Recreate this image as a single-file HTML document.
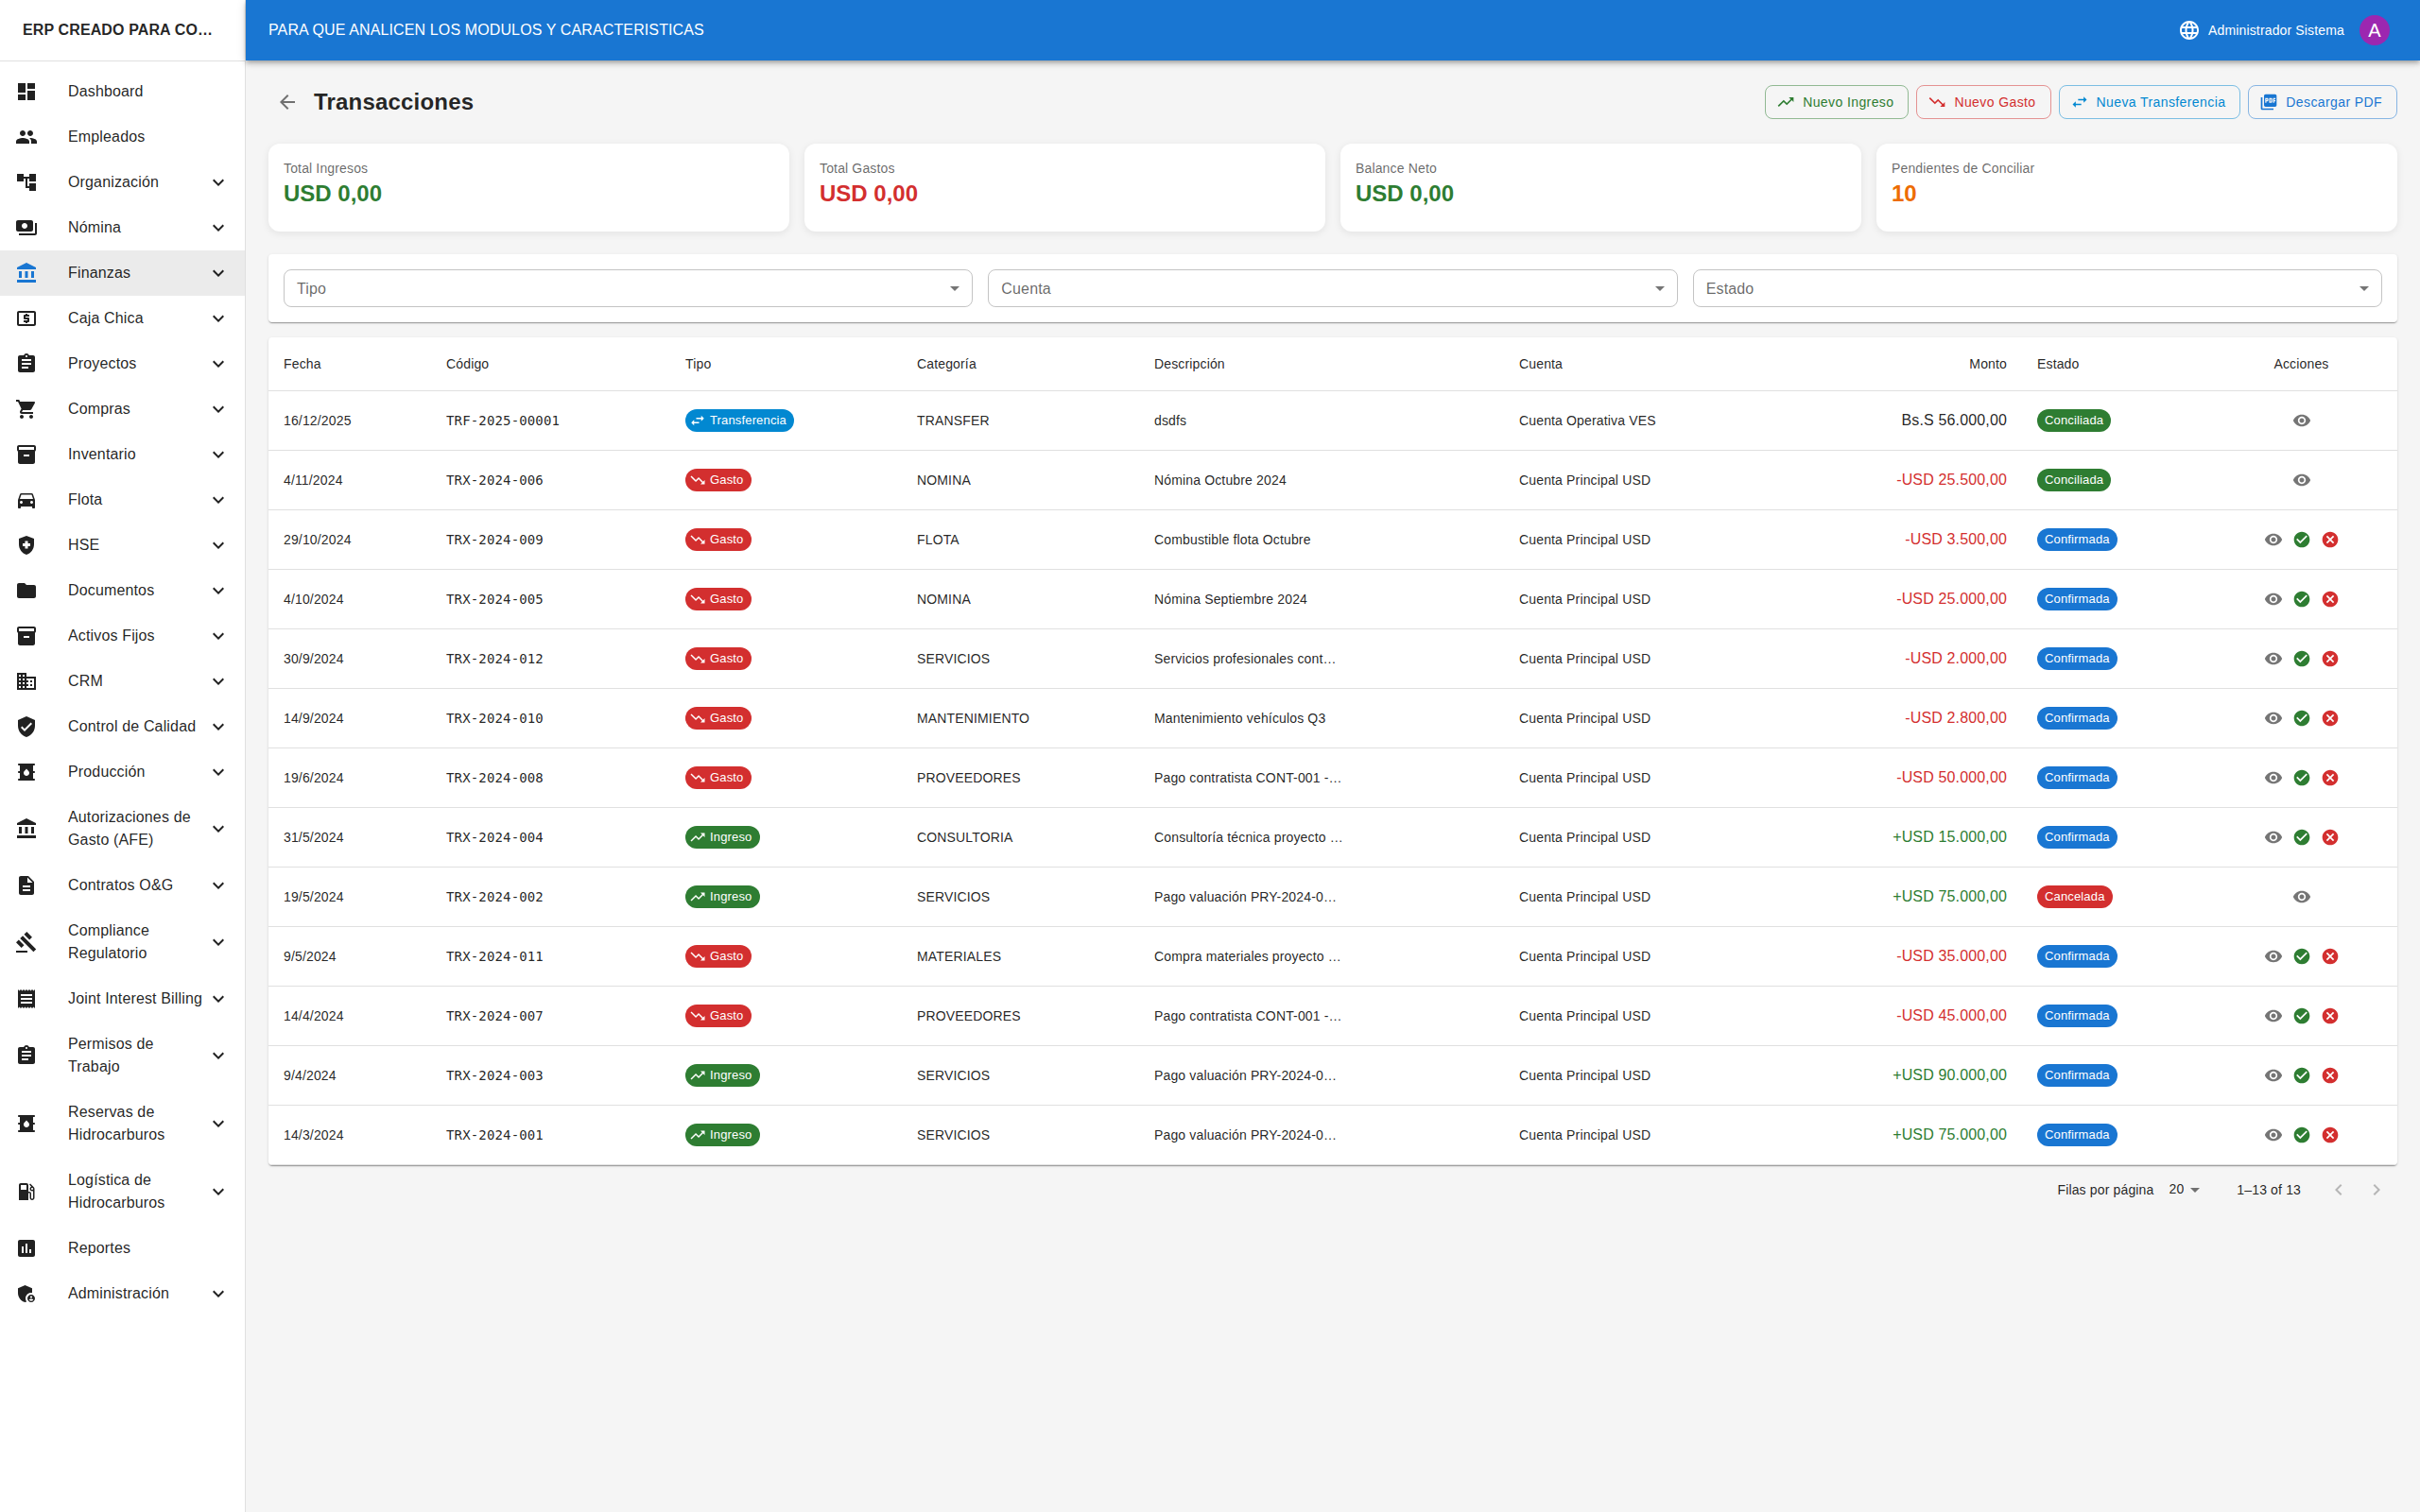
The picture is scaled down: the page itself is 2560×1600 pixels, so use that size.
<!DOCTYPE html>
<html lang="es"><head><meta charset="utf-8"><title>Transacciones</title>
<style>
*{box-sizing:border-box}
html,body{margin:0;padding:0}
body{width:2560px;height:1600px;overflow:hidden;background:#f5f5f5;font-family:"Liberation Sans",sans-serif;color:rgba(0,0,0,0.87);font-size:16px;position:relative}
svg{display:inline-block;flex-shrink:0;fill:currentColor}
.drawer{position:absolute;left:0;top:0;width:260px;height:1600px;background:#fff;border-right:1px solid rgba(0,0,0,0.12)}
.brand{height:65px;padding:0 24px;display:flex;align-items:center;border-bottom:1px solid rgba(0,0,0,0.12);font-weight:bold;font-size:16px;white-space:nowrap;letter-spacing:0.12px}
.menu{list-style:none;margin:0;padding:8px 0 0 0}
.item{height:48px;display:flex;align-items:center;padding:0 16px;position:relative}
.item.two{height:72px}
.item.sel{background:rgba(0,0,0,0.08)}
.item .ico{width:56px;height:24px;display:inline-flex;color:rgba(0,0,0,0.87)}
.item .ico svg{fill:rgba(0,0,0,0.87)}
.item .lbl{flex:1;font-size:16px;line-height:24px;letter-spacing:0.15px}
.item .exp{fill:rgba(0,0,0,0.87)}
.appbar{position:absolute;left:260px;top:0;width:2300px;height:64px;background:#1976d2;color:#fff;display:flex;align-items:center;padding:0 24px;box-shadow:0 2px 4px -1px rgba(0,0,0,.2),0 4px 5px 0 rgba(0,0,0,.14),0 1px 10px 0 rgba(0,0,0,.12)}
.apptitle{flex:1;font-size:16px;white-space:nowrap;letter-spacing:0.12px}
.appright{display:flex;align-items:center;margin-right:8px}
.globe{display:inline-flex;padding:8px;margin-right:0}
.uname{font-size:14px;letter-spacing:0.15px;margin:0 0 0 0}
.avatar{width:32px;height:32px;border-radius:50%;background:#9c27b0;color:#fff;display:inline-flex;align-items:center;justify-content:center;font-size:20px;margin-left:16px}
.main{position:absolute;left:260px;top:64px;width:2300px;padding:24px}
.pagehead{display:flex;align-items:center;height:40px;margin-bottom:24px}
.backbtn{width:40px;height:40px;display:inline-flex;align-items:center;justify-content:center;margin-right:8px}
h1{letter-spacing:0.19px;margin:0;font-size:24px;line-height:32px;font-weight:bold;flex:1}
.btns{display:flex;gap:8px}
.btn{display:inline-flex;align-items:center;height:36.5px;border:1px solid;border-radius:8px;padding:0 15px;font-size:14px;white-space:nowrap;letter-spacing:0.4px}
.btn .bi{margin-left:-4px;margin-right:8px}
.btn.g{color:#2e7d32;border-color:rgba(46,125,50,0.5)}
.btn.r{color:#d32f2f;border-color:rgba(211,47,47,0.5)}
.btn.i{color:#0288d1;border-color:rgba(2,136,209,0.5)}
.btn.p{color:#1976d2;border-color:rgba(25,118,210,0.5)}
.cards{display:flex;gap:16px;height:93px;margin-bottom:24px}
.card{flex:1;background:#fff;border-radius:12px;padding:16px 16px 24px;box-shadow:0 2px 8px rgba(0,0,0,0.08)}
.ct{font-size:14px;line-height:20px;letter-spacing:0.15px;color:rgba(0,0,0,0.6)}
.cv{font-size:24px;line-height:32px;font-weight:bold;margin-top:1px}
.filters{background:#fff;border-radius:4px;padding:16px;display:flex;gap:16px;height:72px;margin-bottom:16px;box-shadow:0 2px 1px -1px rgba(0,0,0,.2),0 1px 1px 0 rgba(0,0,0,.14),0 1px 3px 0 rgba(0,0,0,.12)}
.fsel{flex:1;height:40px;border:1px solid rgba(0,0,0,0.23);border-radius:8px;position:relative;display:flex;align-items:center;padding:0 13px}
.sl{position:relative;top:1px;font-size:16px;letter-spacing:0.15px;color:rgba(0,0,0,0.6)}
.dd{position:absolute;right:6px;top:7px}
.tpaper{background:#fff;border-radius:4px;box-shadow:0 2px 1px -1px rgba(0,0,0,.2),0 1px 1px 0 rgba(0,0,0,.14),0 1px 3px 0 rgba(0,0,0,.12);overflow:hidden}
table{border-collapse:collapse;table-layout:fixed;width:2252px}
th,td{letter-spacing:0.15px;text-align:left;padding:0 16px;font-size:14px;font-weight:normal;border-bottom:1px solid rgba(224,224,224,1);white-space:nowrap;overflow:hidden}
th{height:56.5px;line-height:24px}
td{height:63px}
.ar{text-align:right}
.ac{text-align:center}
.mono{font-family:"DejaVu Sans Mono","Liberation Mono",monospace;font-size:14px}
.amt{font-size:16px}
.amt.r{color:#d32f2f}
.amt.g{color:#2e7d32}
.chip{display:inline-flex;align-items:center;height:24px;border-radius:16px;color:#fff;font-size:13px;vertical-align:middle}
.chip>span{padding:0 8px;line-height:18.59px}
.chip.ic svg{margin-left:4px;margin-right:-4px}
.chip.err.ic>span,.chip.suc.ic>span{padding-right:8.95px}
.chip.suc{background:#2e7d32}
.chip.err{background:#d32f2f}
.chip.pri{background:#1976d2}
.chip.info{background:#0288d1}
.ib{display:inline-flex;padding:5px;vertical-align:middle}
.pager{letter-spacing:0.15px;display:flex;align-items:center;justify-content:flex-end;height:52px;font-size:14px;padding-right:2px}
.pl{margin-right:8px}
.pn{margin-left:8px;position:relative;top:-1px}
.pdd{margin-right:32px}
.pr{margin-right:20px}
.pb{display:inline-flex;padding:8px}

</style></head><body>
<nav class="drawer">
<div class="brand"><span>ERP CREADO PARA CO…</span></div>
<ul class="menu">
<li class="item"><span class="ico"><svg viewBox="0 0 24 24" style="width:24px;height:24px;"><path d="M3 13h8V3H3v10zm0 8h8v-6H3v6zm10 0h8V11h-8v10zm0-18v6h8V3h-8z"/></svg></span><span class="lbl">Dashboard</span></li>
<li class="item"><span class="ico"><svg viewBox="0 0 24 24" style="width:24px;height:24px;"><path d="M16 11c1.66 0 2.99-1.34 2.99-3S17.66 5 16 5c-1.66 0-3 1.34-3 3s1.34 3 3 3zm-8 0c1.66 0 2.99-1.34 2.99-3S9.66 5 8 5C6.34 5 5 6.34 5 8s1.34 3 3 3zm0 2c-2.33 0-7 1.17-7 3.5V19h14v-2.5c0-2.33-4.67-3.5-7-3.5zm8 0c-.29 0-.62.02-.97.05 1.16.84 1.97 1.97 1.97 3.45V19h6v-2.5c0-2.33-4.67-3.5-7-3.5z"/></svg></span><span class="lbl">Empleados</span></li>
<li class="item"><span class="ico"><svg viewBox="0 0 24 24" style="width:24px;height:24px;"><path d="M22 11V3h-7v3H9V3H2v8h7V8h2v10h4v3h7v-8h-7v3h-2V8h2v3z"/></svg></span><span class="lbl">Organización</span><svg class="exp" viewBox="0 0 24 24" style="width:24px;height:24px;"><path d="M16.590 8.590 12 13.170 7.410 8.590 6 10l6 6 6-6z"/></svg></li>
<li class="item"><span class="ico"><svg viewBox="0 0 24 24" style="width:24px;height:24px;"><path d="M19 14V6c0-1.1-.9-2-2-2H3c-1.1 0-2 .9-2 2v8c0 1.1.9 2 2 2h14c1.1 0 2-.9 2-2zm-9-1c-1.66 0-3-1.34-3-3s1.34-3 3-3 3 1.34 3 3-1.34 3-3 3zm13-6v11c0 1.1-.9 2-2 2H4v-2h17V7h2z"/></svg></span><span class="lbl">Nómina</span><svg class="exp" viewBox="0 0 24 24" style="width:24px;height:24px;"><path d="M16.590 8.590 12 13.170 7.410 8.590 6 10l6 6 6-6z"/></svg></li>
<li class="item sel"><span class="ico"><svg viewBox="0 0 24 24" style="width:24px;height:24px;fill:#1976d2;"><path d="M4 10h3v7H4zM10.500 10h3v7h-3zM2 19h20v3H2zM17 10h3v7h-3zM12 1 2 6v2h20V6z"/></svg></span><span class="lbl">Finanzas</span><svg class="exp" viewBox="0 0 24 24" style="width:24px;height:24px;"><path d="M16.590 8.590 12 13.170 7.410 8.590 6 10l6 6 6-6z"/></svg></li>
<li class="item"><span class="ico"><svg viewBox="0 0 24 24" style="width:24px;height:24px;"><path d="M11 17h2v-1h1c.55 0 1-.45 1-1v-3c0-.55-.45-1-1-1h-3v-1h4V8h-2V7h-2v1h-1c-.55 0-1 .45-1 1v3c0 .55.45 1 1 1h3v1H9v2h2v1zm9-13H4c-1.11 0-1.99.89-1.99 2L2 18c0 1.11.89 2 2 2h16c1.11 0 2-.89 2-2V6c0-1.11-.89-2-2-2zm0 14H4V6h16v12z"/></svg></span><span class="lbl">Caja Chica</span><svg class="exp" viewBox="0 0 24 24" style="width:24px;height:24px;"><path d="M16.590 8.590 12 13.170 7.410 8.590 6 10l6 6 6-6z"/></svg></li>
<li class="item"><span class="ico"><svg viewBox="0 0 24 24" style="width:24px;height:24px;"><path d="M19 3h-4.180C14.400 1.840 13.300 1 12 1c-1.300 0-2.400.840-2.820 2H5c-1.100 0-2 .900-2 2v14c0 1.100.900 2 2 2h14c1.100 0 2-.900 2-2V5c0-1.100-.900-2-2-2zm-7 0c.550 0 1 .450 1 1s-.450 1-1 1-1-.450-1-1 .450-1 1-1zm2 14H7v-2h7v2zm3-4H7v-2h10v2zm0-4H7V7h10v2z"/></svg></span><span class="lbl">Proyectos</span><svg class="exp" viewBox="0 0 24 24" style="width:24px;height:24px;"><path d="M16.590 8.590 12 13.170 7.410 8.590 6 10l6 6 6-6z"/></svg></li>
<li class="item"><span class="ico"><svg viewBox="0 0 24 24" style="width:24px;height:24px;"><path d="M7 18c-1.100 0-1.990.900-1.990 2S5.900 22 7 22s2-.900 2-2-.900-2-2-2zM1 2v2h2l3.600 7.590-1.350 2.450c-.160.280-.250.610-.250.960 0 1.100.900 2 2 2h12v-2H7.420c-.140 0-.250-.110-.250-.250l.030-.120.900-1.630h7.450c.750 0 1.410-.410 1.750-1.030l3.580-6.490c.080-.140.120-.310.120-.480 0-.550-.450-1-1-1H5.210l-.940-2H1zm16 16c-1.100 0-1.990.900-1.990 2s.890 2 1.990 2 2-.900 2-2-.900-2-2-2z"/></svg></span><span class="lbl">Compras</span><svg class="exp" viewBox="0 0 24 24" style="width:24px;height:24px;"><path d="M16.590 8.590 12 13.170 7.410 8.590 6 10l6 6 6-6z"/></svg></li>
<li class="item"><span class="ico"><svg viewBox="0 0 24 24" style="width:24px;height:24px;"><path d="M20 2H4c-1 0-2 .9-2 2v3.010c0 .720.430 1.340 1 1.690V20c0 1.100 1.100 2 2 2h14c.900 0 2-.900 2-2V8.700c.570-.350 1-.970 1-1.690V4c0-1.100-1-2-2-2zm-5 12H9v-2h6v2zm5-7H4V4h16v3z"/></svg></span><span class="lbl">Inventario</span><svg class="exp" viewBox="0 0 24 24" style="width:24px;height:24px;"><path d="M16.590 8.590 12 13.170 7.410 8.590 6 10l6 6 6-6z"/></svg></li>
<li class="item"><span class="ico"><svg viewBox="0 0 24 24" style="width:24px;height:24px;"><path d="M18.920 6.010C18.720 5.420 18.160 5 17.500 5h-11c-.660 0-1.210.420-1.420 1.010L3 12v8c0 .550.450 1 1 1h1c.550 0 1-.450 1-1v-1h12v1c0 .550.450 1 1 1h1c.550 0 1-.450 1-1v-8l-2.080-5.990zM6.500 16c-.830 0-1.500-.670-1.500-1.500S5.670 13 6.500 13s1.500.670 1.500 1.500S7.330 16 6.500 16zm11 0c-.830 0-1.500-.670-1.500-1.500s.670-1.500 1.500-1.500 1.500.670 1.500 1.500-.670 1.500-1.500 1.500zM5 11l1.500-4.500h11L19 11H5z"/></svg></span><span class="lbl">Flota</span><svg class="exp" viewBox="0 0 24 24" style="width:24px;height:24px;"><path d="M16.590 8.590 12 13.170 7.410 8.590 6 10l6 6 6-6z"/></svg></li>
<li class="item"><span class="ico"><svg viewBox="0 0 24 24" style="width:24px;height:24px;"><path d="M10.500 13H8v-3h2.500V7.500h3V10H16v3h-2.500v2.500h-3V13zM12 2 4 5v6.090c0 5.050 3.410 9.760 8 10.910 4.590-1.150 8-5.860 8-10.910V5l-8-3z"/></svg></span><span class="lbl">HSE</span><svg class="exp" viewBox="0 0 24 24" style="width:24px;height:24px;"><path d="M16.590 8.590 12 13.170 7.410 8.590 6 10l6 6 6-6z"/></svg></li>
<li class="item"><span class="ico"><svg viewBox="0 0 24 24" style="width:24px;height:24px;"><path d="M10 4H4c-1.100 0-1.990.900-1.990 2L2 18c0 1.100.900 2 2 2h16c1.100 0 2-.900 2-2V8c0-1.100-.900-2-2-2h-8l-2-2z"/></svg></span><span class="lbl">Documentos</span><svg class="exp" viewBox="0 0 24 24" style="width:24px;height:24px;"><path d="M16.590 8.590 12 13.170 7.410 8.590 6 10l6 6 6-6z"/></svg></li>
<li class="item"><span class="ico"><svg viewBox="0 0 24 24" style="width:24px;height:24px;"><path d="M20 2H4c-1 0-2 .9-2 2v3.010c0 .720.430 1.340 1 1.690V20c0 1.100 1.100 2 2 2h14c.900 0 2-.900 2-2V8.700c.570-.350 1-.970 1-1.690V4c0-1.100-1-2-2-2zm-5 12H9v-2h6v2zm5-7H4V4h16v3z"/></svg></span><span class="lbl">Activos Fijos</span><svg class="exp" viewBox="0 0 24 24" style="width:24px;height:24px;"><path d="M16.590 8.590 12 13.170 7.410 8.590 6 10l6 6 6-6z"/></svg></li>
<li class="item"><span class="ico"><svg viewBox="0 0 24 24" style="width:24px;height:24px;"><path d="M12 7V3H2v18h20V7H12zM6 19H4v-2h2v2zm0-4H4v-2h2v2zm0-4H4V9h2v2zm0-4H4V5h2v2zm4 12H8v-2h2v2zm0-4H8v-2h2v2zm0-4H8V9h2v2zm0-4H8V5h2v2zm10 12h-8v-2h2v-2h-2v-2h2v-2h-2V9h8v10zm-2-8h-2v2h2v-2zm0 4h-2v2h2v-2z"/></svg></span><span class="lbl">CRM</span><svg class="exp" viewBox="0 0 24 24" style="width:24px;height:24px;"><path d="M16.590 8.590 12 13.170 7.410 8.590 6 10l6 6 6-6z"/></svg></li>
<li class="item"><span class="ico"><svg viewBox="0 0 24 24" style="width:24px;height:24px;"><path d="M12 1 3 5v6c0 5.550 3.840 10.740 9 12 5.160-1.260 9-6.450 9-12V5l-9-4zm-2 16-4-4 1.410-1.410L10 14.170l6.590-6.590L18 9l-8 8z"/></svg></span><span class="lbl">Control de Calidad</span><svg class="exp" viewBox="0 0 24 24" style="width:24px;height:24px;"><path d="M16.590 8.590 12 13.170 7.410 8.590 6 10l6 6 6-6z"/></svg></li>
<li class="item"><span class="ico"><svg viewBox="0 0 24 24" style="width:24px;height:24px;"><path d="M20 13c.55 0 1-.45 1-1s-.45-1-1-1h-1V5h1c.55 0 1-.45 1-1s-.45-1-1-1H4c-.55 0-1 .45-1 1s.45 1 1 1h1v6H4c-.55 0-1 .45-1 1s.45 1 1 1h1v6H4c-.55 0-1 .45-1 1s.45 1 1 1h16c.55 0 1-.45 1-1s-.45-1-1-1h-1v-6h1zm-8 3c-1.660 0-3-1.320-3-2.950 0-1.300.520-1.670 3-4.550 2.470 2.860 3 3.240 3 4.550 0 1.630-1.340 2.950-3 2.950z"/></svg></span><span class="lbl">Producción</span><svg class="exp" viewBox="0 0 24 24" style="width:24px;height:24px;"><path d="M16.590 8.590 12 13.170 7.410 8.590 6 10l6 6 6-6z"/></svg></li>
<li class="item two"><span class="ico"><svg viewBox="0 0 24 24" style="width:24px;height:24px;"><path d="M4 10h3v7H4zM10.500 10h3v7h-3zM2 19h20v3H2zM17 10h3v7h-3zM12 1 2 6v2h20V6z"/></svg></span><span class="lbl">Autorizaciones de<br>Gasto (AFE)</span><svg class="exp" viewBox="0 0 24 24" style="width:24px;height:24px;"><path d="M16.590 8.590 12 13.170 7.410 8.590 6 10l6 6 6-6z"/></svg></li>
<li class="item"><span class="ico"><svg viewBox="0 0 24 24" style="width:24px;height:24px;"><path d="M14 2H6c-1.100 0-1.990.900-1.990 2L4 20c0 1.100.890 2 1.990 2H18c1.100 0 2-.900 2-2V8l-6-6zm2 16H8v-2h8v2zm0-4H8v-2h8v2zm-3-5V3.500L18.500 9H13z"/></svg></span><span class="lbl">Contratos O&amp;G</span><svg class="exp" viewBox="0 0 24 24" style="width:24px;height:24px;"><path d="M16.590 8.590 12 13.170 7.410 8.590 6 10l6 6 6-6z"/></svg></li>
<li class="item two"><span class="ico"><svg viewBox="0 0 24 24" style="width:24px;height:24px;"><path d="M1 21h12v2H1zM5.245 8.070l2.830-2.827 14.140 14.142-2.828 2.828zM12.317 1l5.657 5.656-2.830 2.830-5.654-5.660zM3.825 9.485l5.657 5.657-2.828 2.828-5.657-5.657z"/></svg></span><span class="lbl">Compliance<br>Regulatorio</span><svg class="exp" viewBox="0 0 24 24" style="width:24px;height:24px;"><path d="M16.590 8.590 12 13.170 7.410 8.590 6 10l6 6 6-6z"/></svg></li>
<li class="item"><span class="ico"><svg viewBox="0 0 24 24" style="width:24px;height:24px;"><path d="M18 17H6v-2h12v2zm0-4H6v-2h12v2zm0-4H6V7h12v2zM3 22l1.500-1.500L6 22l1.500-1.500L9 22l1.500-1.500L12 22l1.500-1.500L15 22l1.500-1.500L18 22l1.500-1.500L21 22V2l-1.500 1.500L18 2l-1.500 1.500L15 2l-1.500 1.500L12 2l-1.500 1.500L9 2 7.500 3.500 6 2 4.500 3.500 3 2v20z"/></svg></span><span class="lbl">Joint Interest Billing</span><svg class="exp" viewBox="0 0 24 24" style="width:24px;height:24px;"><path d="M16.590 8.590 12 13.170 7.410 8.590 6 10l6 6 6-6z"/></svg></li>
<li class="item two"><span class="ico"><svg viewBox="0 0 24 24" style="width:24px;height:24px;"><path d="M19 3h-4.180C14.400 1.840 13.300 1 12 1c-1.300 0-2.400.840-2.820 2H5c-1.100 0-2 .900-2 2v14c0 1.100.900 2 2 2h14c1.100 0 2-.900 2-2V5c0-1.100-.900-2-2-2zm-7 0c.550 0 1 .450 1 1s-.450 1-1 1-1-.450-1-1 .450-1 1-1zm2 14H7v-2h7v2zm3-4H7v-2h10v2zm0-4H7V7h10v2z"/></svg></span><span class="lbl">Permisos de<br>Trabajo</span><svg class="exp" viewBox="0 0 24 24" style="width:24px;height:24px;"><path d="M16.590 8.590 12 13.170 7.410 8.590 6 10l6 6 6-6z"/></svg></li>
<li class="item two"><span class="ico"><svg viewBox="0 0 24 24" style="width:24px;height:24px;"><path d="M20 13c.55 0 1-.45 1-1s-.45-1-1-1h-1V5h1c.55 0 1-.45 1-1s-.45-1-1-1H4c-.55 0-1 .45-1 1s.45 1 1 1h1v6H4c-.55 0-1 .45-1 1s.45 1 1 1h1v6H4c-.55 0-1 .45-1 1s.45 1 1 1h16c.55 0 1-.45 1-1s-.45-1-1-1h-1v-6h1zm-8 3c-1.660 0-3-1.320-3-2.950 0-1.300.520-1.670 3-4.550 2.470 2.860 3 3.240 3 4.550 0 1.630-1.340 2.950-3 2.950z"/></svg></span><span class="lbl">Reservas de<br>Hidrocarburos</span><svg class="exp" viewBox="0 0 24 24" style="width:24px;height:24px;"><path d="M16.590 8.590 12 13.170 7.410 8.590 6 10l6 6 6-6z"/></svg></li>
<li class="item two"><span class="ico"><svg viewBox="0 0 24 24" style="width:24px;height:24px;"><path d="M19.770 7.230l.010-.010-3.720-3.720L15 4.560l2.110 2.110c-.940.360-1.610 1.260-1.610 2.330 0 1.380 1.120 2.500 2.500 2.500.360 0 .690-.080 1-.210v7.210c0 .550-.450 1-1 1s-1-.450-1-1V14c0-1.100-.900-2-2-2h-1V5c0-1.100-.900-2-2-2H6c-1.100 0-2 .900-2 2v16h10v-7.500h1.500v5c0 1.380 1.120 2.500 2.500 2.500s2.500-1.120 2.500-2.500V9c0-.690-.280-1.320-.730-1.770zM12 10H6V5h6v5zm6 0c-.550 0-1-.450-1-1s.450-1 1-1 1 .450 1 1-.450 1-1 1z"/></svg></span><span class="lbl">Logística de<br>Hidrocarburos</span><svg class="exp" viewBox="0 0 24 24" style="width:24px;height:24px;"><path d="M16.590 8.590 12 13.170 7.410 8.590 6 10l6 6 6-6z"/></svg></li>
<li class="item"><span class="ico"><svg viewBox="0 0 24 24" style="width:24px;height:24px;"><path d="M19 3H5c-1.100 0-2 .900-2 2v14c0 1.100.900 2 2 2h14c1.100 0 2-.900 2-2V5c0-1.100-.900-2-2-2zM9 17H7v-7h2v7zm4 0h-2V7h2v10zm4 0h-2v-4h2v4z"/></svg></span><span class="lbl">Reportes</span></li>
<li class="item"><span class="ico"><svg viewBox="0 0 24 24" style="width:24px;height:24px;"><path d="M17 11c.340 0 .670.040 1 .090V6.270L10.500 3 3 6.270v4.910c0 4.540 3.200 8.790 7.500 9.820.550-.130 1.080-.320 1.600-.550-.690-.980-1.100-2.170-1.100-3.450 0-3.310 2.690-6 6-6zM17 13c-2.210 0-4 1.790-4 4s1.790 4 4 4 4-1.790 4-4-1.790-4-4-4zm0 1.380c.620 0 1.120.510 1.120 1.120s-.510 1.120-1.120 1.120-1.120-.510-1.120-1.120.500-1.120 1.120-1.120zm0 5.370c-.930 0-1.740-.460-2.240-1.170.050-.720 1.510-1.080 2.240-1.080s2.190.360 2.240 1.080c-.500.710-1.310 1.170-2.240 1.170z"/></svg></span><span class="lbl">Administración</span><svg class="exp" viewBox="0 0 24 24" style="width:24px;height:24px;"><path d="M16.590 8.590 12 13.170 7.410 8.590 6 10l6 6 6-6z"/></svg></li>
</ul></nav>
<header class="appbar"><div class="apptitle">PARA QUE ANALICEN LOS MODULOS Y CARACTERISTICAS</div>
<div class="appright"><span class="globe"><svg viewBox="0 0 24 24" style="width:24px;height:24px;fill:#fff;"><path d="M11.990 2C6.470 2 2 6.480 2 12s4.470 10 9.990 10C17.520 22 22 17.520 22 12S17.520 2 11.990 2zm6.930 6h-2.950c-.320-1.250-.780-2.450-1.380-3.560 1.840.630 3.370 1.910 4.330 3.560zM12 4.040c.830 1.200 1.480 2.530 1.910 3.960h-3.820c.430-1.430 1.080-2.760 1.910-3.960zM4.260 14C4.100 13.360 4 12.690 4 12s.100-1.360.260-2h3.380c-.080.660-.140 1.320-.140 2 0 .680.060 1.340.140 2H4.260zm.820 2h2.950c.320 1.250.780 2.450 1.380 3.560-1.840-.630-3.370-1.900-4.330-3.560zm2.950-8H5.080c.960-1.660 2.490-2.930 4.330-3.560C8.810 5.550 8.350 6.750 8.030 8zM12 19.960c-.830-1.200-1.480-2.530-1.910-3.960h3.820c-.430 1.430-1.080 2.760-1.910 3.960zM14.340 14H9.660c-.090-.660-.160-1.320-.160-2 0-.680.070-1.350.160-2h4.680c.090.650.160 1.320.160 2 0 .680-.070 1.340-.160 2zm.250 5.560c.600-1.110 1.060-2.310 1.380-3.560h2.950c-.960 1.650-2.490 2.930-4.330 3.560zM16.360 14c.080-.660.140-1.320.140-2 0-.680-.060-1.340-.140-2h3.380c.160.640.260 1.310.260 2s-.100 1.360-.260 2h-3.380z"/></svg></span><span class="uname">Administrador Sistema</span><span class="avatar">A</span></div></header>
<main class="main">
<div class="pagehead"><span class="backbtn"><svg viewBox="0 0 24 24" style="width:24px;height:24px;fill:rgba(0,0,0,0.54);"><path d="M20 11H7.830l5.590-5.590L12 4l-8 8 8 8 1.410-1.410L7.830 13H20v-2z"/></svg></span><h1>Transacciones</h1>
<div class="btns">
<span class="btn g"><svg class="bi" viewBox="0 0 24 24" style="width:20px;height:20px;"><path d="m16 6 2.290 2.290-4.880 4.880-4-4L2 16.590 3.410 18l6-6 4 4 6.300-6.290L22 12V6z"/></svg>Nuevo Ingreso</span>
<span class="btn r"><svg class="bi" viewBox="0 0 24 24" style="width:20px;height:20px;"><path d="m16 18 2.290-2.290-4.880-4.880-4 4L2 7.410 3.410 6l6 6 4-4 6.300 6.290L22 12v6z"/></svg>Nuevo Gasto</span>
<span class="btn i"><svg class="bi" viewBox="0 0 24 24" style="width:20px;height:20px;"><path d="M6.990 11 3 15l3.990 4v-3H14v-2H6.990v-3zM21 9l-3.990-4v3H10v2h7.010v3L21 9z"/></svg>Nueva Transferencia</span>
<span class="btn p"><svg class="bi" viewBox="0 0 24 24" style="width:20px;height:20px;"><path d="M20 2H8c-1.100 0-2 .900-2 2v12c0 1.100.900 2 2 2h12c1.100 0 2-.900 2-2V4c0-1.100-.900-2-2-2zm-8.500 7.500c0 .830-.670 1.500-1.500 1.500H9v2H7.500V7H10c.830 0 1.500.670 1.500 1.500v1zm5 2c0 .830-.670 1.500-1.500 1.500h-2.500V7H15c.830 0 1.500.670 1.500 1.500v3zm4-3H19v1h1.500V11H19v2h-1.500V7h3v1.500zM9 9.500h1v-1H9v1zM4 6H2v14c0 1.100.900 2 2 2h14v-2H4V6zm10 5.500h1v-3h-1v3z"/></svg>Descargar PDF</span>
</div></div>
<div class="cards">
<div class="card"><div class="ct">Total Ingresos</div><div class="cv" style="color:#2e7d32">USD 0,00</div></div>
<div class="card"><div class="ct">Total Gastos</div><div class="cv" style="color:#d32f2f">USD 0,00</div></div>
<div class="card"><div class="ct">Balance Neto</div><div class="cv" style="color:#2e7d32">USD 0,00</div></div>
<div class="card"><div class="ct">Pendientes de Conciliar</div><div class="cv" style="color:#ed6c02">10</div></div>
</div>
<div class="filters">
<div class="fsel"><span class="sl">Tipo</span><svg class="dd" viewBox="0 0 24 24" style="width:24px;height:24px;fill:rgba(0,0,0,0.54);"><path d="m7 10 5 5 5-5z"/></svg></div>
<div class="fsel"><span class="sl">Cuenta</span><svg class="dd" viewBox="0 0 24 24" style="width:24px;height:24px;fill:rgba(0,0,0,0.54);"><path d="m7 10 5 5 5-5z"/></svg></div>
<div class="fsel"><span class="sl">Estado</span><svg class="dd" viewBox="0 0 24 24" style="width:24px;height:24px;fill:rgba(0,0,0,0.54);"><path d="m7 10 5 5 5-5z"/></svg></div>
</div>
<div class="tpaper"><table><colgroup><col style="width:172px"><col style="width:253px"><col style="width:245px"><col style="width:251px"><col style="width:386px"><col style="width:333px"><col style="width:215px"><col style="width:194px"><col style="width:203px"></colgroup>
<thead><tr><th>Fecha</th><th>Código</th><th>Tipo</th><th>Categoría</th><th>Descripción</th><th>Cuenta</th><th class="ar">Monto</th><th>Estado</th><th class="ac">Acciones</th></tr></thead><tbody>
<tr><td>16/12/2025</td><td class="mono">TRF-2025-00001</td><td><span class="chip info ic"><svg viewBox="0 0 24 24" style="width:18px;height:18px;fill:#fff;"><path d="M6.990 11 3 15l3.990 4v-3H14v-2H6.990v-3zM21 9l-3.990-4v3H10v2h7.010v3L21 9z"/></svg><span>Transferencia</span></span></td><td>TRANSFER</td><td>dsdfs</td><td>Cuenta Operativa VES</td><td class="ar amt n">Bs.S 56.000,00</td><td><span class="chip suc"><span>Conciliada</span></span></td><td class="ac"><span class="ib"><svg viewBox="0 0 24 24" style="width:20px;height:20px;fill:rgba(0,0,0,0.54);"><path d="M12 4.500C7 4.500 2.730 7.610 1 12c1.730 4.390 6 7.500 11 7.500s9.270-3.110 11-7.500c-1.730-4.390-6-7.500-11-7.500zM12 17c-2.760 0-5-2.240-5-5s2.240-5 5-5 5 2.240 5 5-2.240 5-5 5zm0-8c-1.660 0-3 1.340-3 3s1.340 3 3 3 3-1.340 3-3-1.340-3-3-3z"/></svg></span></td></tr>
<tr><td>4/11/2024</td><td class="mono">TRX-2024-006</td><td><span class="chip err ic"><svg viewBox="0 0 24 24" style="width:18px;height:18px;fill:#fff;"><path d="m16 18 2.290-2.290-4.880-4.880-4 4L2 7.410 3.410 6l6 6 4-4 6.300 6.290L22 12v6z"/></svg><span>Gasto</span></span></td><td>NOMINA</td><td>Nómina Octubre 2024</td><td>Cuenta Principal USD</td><td class="ar amt r">-USD 25.500,00</td><td><span class="chip suc"><span>Conciliada</span></span></td><td class="ac"><span class="ib"><svg viewBox="0 0 24 24" style="width:20px;height:20px;fill:rgba(0,0,0,0.54);"><path d="M12 4.500C7 4.500 2.730 7.610 1 12c1.730 4.390 6 7.500 11 7.500s9.270-3.110 11-7.500c-1.730-4.390-6-7.500-11-7.500zM12 17c-2.760 0-5-2.240-5-5s2.240-5 5-5 5 2.240 5 5-2.240 5-5 5zm0-8c-1.660 0-3 1.340-3 3s1.340 3 3 3 3-1.340 3-3-1.340-3-3-3z"/></svg></span></td></tr>
<tr><td>29/10/2024</td><td class="mono">TRX-2024-009</td><td><span class="chip err ic"><svg viewBox="0 0 24 24" style="width:18px;height:18px;fill:#fff;"><path d="m16 18 2.290-2.290-4.880-4.880-4 4L2 7.410 3.410 6l6 6 4-4 6.300 6.290L22 12v6z"/></svg><span>Gasto</span></span></td><td>FLOTA</td><td>Combustible flota Octubre</td><td>Cuenta Principal USD</td><td class="ar amt r">-USD 3.500,00</td><td><span class="chip pri"><span>Confirmada</span></span></td><td class="ac"><span class="ib"><svg viewBox="0 0 24 24" style="width:20px;height:20px;fill:rgba(0,0,0,0.54);"><path d="M12 4.500C7 4.500 2.730 7.610 1 12c1.730 4.390 6 7.500 11 7.500s9.270-3.110 11-7.500c-1.730-4.390-6-7.500-11-7.500zM12 17c-2.760 0-5-2.240-5-5s2.240-5 5-5 5 2.240 5 5-2.240 5-5 5zm0-8c-1.660 0-3 1.340-3 3s1.340 3 3 3 3-1.340 3-3-1.340-3-3-3z"/></svg></span><span class="ib"><svg viewBox="0 0 24 24" style="width:20px;height:20px;fill:#2e7d32;"><path d="M12 2C6.480 2 2 6.480 2 12s4.480 10 10 10 10-4.480 10-10S17.520 2 12 2zm-2 15-5-5 1.410-1.410L10 14.170l7.590-7.590L19 8l-9 9z"/></svg></span><span class="ib"><svg viewBox="0 0 24 24" style="width:20px;height:20px;fill:#d32f2f;"><path d="M12 2C6.470 2 2 6.470 2 12s4.470 10 10 10 10-4.470 10-10S17.530 2 12 2zm5 13.590L15.590 17 12 13.410 8.410 17 7 15.590 10.590 12 7 8.410 8.410 7 12 10.590 15.590 7 17 8.410 13.410 12 17 15.590z"/></svg></span></td></tr>
<tr><td>4/10/2024</td><td class="mono">TRX-2024-005</td><td><span class="chip err ic"><svg viewBox="0 0 24 24" style="width:18px;height:18px;fill:#fff;"><path d="m16 18 2.290-2.290-4.880-4.880-4 4L2 7.410 3.410 6l6 6 4-4 6.300 6.290L22 12v6z"/></svg><span>Gasto</span></span></td><td>NOMINA</td><td>Nómina Septiembre 2024</td><td>Cuenta Principal USD</td><td class="ar amt r">-USD 25.000,00</td><td><span class="chip pri"><span>Confirmada</span></span></td><td class="ac"><span class="ib"><svg viewBox="0 0 24 24" style="width:20px;height:20px;fill:rgba(0,0,0,0.54);"><path d="M12 4.500C7 4.500 2.730 7.610 1 12c1.730 4.390 6 7.500 11 7.500s9.270-3.110 11-7.500c-1.730-4.390-6-7.500-11-7.500zM12 17c-2.760 0-5-2.240-5-5s2.240-5 5-5 5 2.240 5 5-2.240 5-5 5zm0-8c-1.660 0-3 1.340-3 3s1.340 3 3 3 3-1.340 3-3-1.340-3-3-3z"/></svg></span><span class="ib"><svg viewBox="0 0 24 24" style="width:20px;height:20px;fill:#2e7d32;"><path d="M12 2C6.480 2 2 6.480 2 12s4.480 10 10 10 10-4.480 10-10S17.520 2 12 2zm-2 15-5-5 1.410-1.410L10 14.170l7.590-7.590L19 8l-9 9z"/></svg></span><span class="ib"><svg viewBox="0 0 24 24" style="width:20px;height:20px;fill:#d32f2f;"><path d="M12 2C6.470 2 2 6.470 2 12s4.470 10 10 10 10-4.470 10-10S17.530 2 12 2zm5 13.590L15.590 17 12 13.410 8.410 17 7 15.590 10.590 12 7 8.410 8.410 7 12 10.590 15.590 7 17 8.410 13.410 12 17 15.590z"/></svg></span></td></tr>
<tr><td>30/9/2024</td><td class="mono">TRX-2024-012</td><td><span class="chip err ic"><svg viewBox="0 0 24 24" style="width:18px;height:18px;fill:#fff;"><path d="m16 18 2.290-2.290-4.880-4.880-4 4L2 7.410 3.410 6l6 6 4-4 6.300 6.290L22 12v6z"/></svg><span>Gasto</span></span></td><td>SERVICIOS</td><td>Servicios profesionales cont…</td><td>Cuenta Principal USD</td><td class="ar amt r">-USD 2.000,00</td><td><span class="chip pri"><span>Confirmada</span></span></td><td class="ac"><span class="ib"><svg viewBox="0 0 24 24" style="width:20px;height:20px;fill:rgba(0,0,0,0.54);"><path d="M12 4.500C7 4.500 2.730 7.610 1 12c1.730 4.390 6 7.500 11 7.500s9.270-3.110 11-7.500c-1.730-4.390-6-7.500-11-7.500zM12 17c-2.760 0-5-2.240-5-5s2.240-5 5-5 5 2.240 5 5-2.240 5-5 5zm0-8c-1.660 0-3 1.340-3 3s1.340 3 3 3 3-1.340 3-3-1.340-3-3-3z"/></svg></span><span class="ib"><svg viewBox="0 0 24 24" style="width:20px;height:20px;fill:#2e7d32;"><path d="M12 2C6.480 2 2 6.480 2 12s4.480 10 10 10 10-4.480 10-10S17.520 2 12 2zm-2 15-5-5 1.410-1.410L10 14.170l7.590-7.590L19 8l-9 9z"/></svg></span><span class="ib"><svg viewBox="0 0 24 24" style="width:20px;height:20px;fill:#d32f2f;"><path d="M12 2C6.470 2 2 6.470 2 12s4.470 10 10 10 10-4.470 10-10S17.530 2 12 2zm5 13.590L15.590 17 12 13.410 8.410 17 7 15.590 10.590 12 7 8.410 8.410 7 12 10.590 15.590 7 17 8.410 13.410 12 17 15.590z"/></svg></span></td></tr>
<tr><td>14/9/2024</td><td class="mono">TRX-2024-010</td><td><span class="chip err ic"><svg viewBox="0 0 24 24" style="width:18px;height:18px;fill:#fff;"><path d="m16 18 2.290-2.290-4.880-4.880-4 4L2 7.410 3.410 6l6 6 4-4 6.300 6.290L22 12v6z"/></svg><span>Gasto</span></span></td><td>MANTENIMIENTO</td><td>Mantenimiento vehículos Q3</td><td>Cuenta Principal USD</td><td class="ar amt r">-USD 2.800,00</td><td><span class="chip pri"><span>Confirmada</span></span></td><td class="ac"><span class="ib"><svg viewBox="0 0 24 24" style="width:20px;height:20px;fill:rgba(0,0,0,0.54);"><path d="M12 4.500C7 4.500 2.730 7.610 1 12c1.730 4.390 6 7.500 11 7.500s9.270-3.110 11-7.500c-1.730-4.390-6-7.500-11-7.500zM12 17c-2.760 0-5-2.240-5-5s2.240-5 5-5 5 2.240 5 5-2.240 5-5 5zm0-8c-1.660 0-3 1.340-3 3s1.340 3 3 3 3-1.340 3-3-1.340-3-3-3z"/></svg></span><span class="ib"><svg viewBox="0 0 24 24" style="width:20px;height:20px;fill:#2e7d32;"><path d="M12 2C6.480 2 2 6.480 2 12s4.480 10 10 10 10-4.480 10-10S17.520 2 12 2zm-2 15-5-5 1.410-1.410L10 14.170l7.590-7.590L19 8l-9 9z"/></svg></span><span class="ib"><svg viewBox="0 0 24 24" style="width:20px;height:20px;fill:#d32f2f;"><path d="M12 2C6.470 2 2 6.470 2 12s4.470 10 10 10 10-4.470 10-10S17.530 2 12 2zm5 13.590L15.590 17 12 13.410 8.410 17 7 15.590 10.590 12 7 8.410 8.410 7 12 10.590 15.590 7 17 8.410 13.410 12 17 15.590z"/></svg></span></td></tr>
<tr><td>19/6/2024</td><td class="mono">TRX-2024-008</td><td><span class="chip err ic"><svg viewBox="0 0 24 24" style="width:18px;height:18px;fill:#fff;"><path d="m16 18 2.290-2.290-4.880-4.880-4 4L2 7.410 3.410 6l6 6 4-4 6.300 6.290L22 12v6z"/></svg><span>Gasto</span></span></td><td>PROVEEDORES</td><td>Pago contratista CONT-001 -…</td><td>Cuenta Principal USD</td><td class="ar amt r">-USD 50.000,00</td><td><span class="chip pri"><span>Confirmada</span></span></td><td class="ac"><span class="ib"><svg viewBox="0 0 24 24" style="width:20px;height:20px;fill:rgba(0,0,0,0.54);"><path d="M12 4.500C7 4.500 2.730 7.610 1 12c1.730 4.390 6 7.500 11 7.500s9.270-3.110 11-7.500c-1.730-4.390-6-7.500-11-7.500zM12 17c-2.760 0-5-2.240-5-5s2.240-5 5-5 5 2.240 5 5-2.240 5-5 5zm0-8c-1.660 0-3 1.340-3 3s1.340 3 3 3 3-1.340 3-3-1.340-3-3-3z"/></svg></span><span class="ib"><svg viewBox="0 0 24 24" style="width:20px;height:20px;fill:#2e7d32;"><path d="M12 2C6.480 2 2 6.480 2 12s4.480 10 10 10 10-4.480 10-10S17.520 2 12 2zm-2 15-5-5 1.410-1.410L10 14.170l7.590-7.590L19 8l-9 9z"/></svg></span><span class="ib"><svg viewBox="0 0 24 24" style="width:20px;height:20px;fill:#d32f2f;"><path d="M12 2C6.470 2 2 6.470 2 12s4.470 10 10 10 10-4.470 10-10S17.530 2 12 2zm5 13.590L15.590 17 12 13.410 8.410 17 7 15.590 10.590 12 7 8.410 8.410 7 12 10.590 15.590 7 17 8.410 13.410 12 17 15.590z"/></svg></span></td></tr>
<tr><td>31/5/2024</td><td class="mono">TRX-2024-004</td><td><span class="chip suc ic"><svg viewBox="0 0 24 24" style="width:18px;height:18px;fill:#fff;"><path d="m16 6 2.290 2.290-4.880 4.880-4-4L2 16.590 3.410 18l6-6 4 4 6.300-6.290L22 12V6z"/></svg><span>Ingreso</span></span></td><td>CONSULTORIA</td><td>Consultoría técnica proyecto …</td><td>Cuenta Principal USD</td><td class="ar amt g">+USD 15.000,00</td><td><span class="chip pri"><span>Confirmada</span></span></td><td class="ac"><span class="ib"><svg viewBox="0 0 24 24" style="width:20px;height:20px;fill:rgba(0,0,0,0.54);"><path d="M12 4.500C7 4.500 2.730 7.610 1 12c1.730 4.390 6 7.500 11 7.500s9.270-3.110 11-7.500c-1.730-4.390-6-7.500-11-7.500zM12 17c-2.760 0-5-2.240-5-5s2.240-5 5-5 5 2.240 5 5-2.240 5-5 5zm0-8c-1.660 0-3 1.340-3 3s1.340 3 3 3 3-1.340 3-3-1.340-3-3-3z"/></svg></span><span class="ib"><svg viewBox="0 0 24 24" style="width:20px;height:20px;fill:#2e7d32;"><path d="M12 2C6.480 2 2 6.480 2 12s4.480 10 10 10 10-4.480 10-10S17.520 2 12 2zm-2 15-5-5 1.410-1.410L10 14.170l7.590-7.590L19 8l-9 9z"/></svg></span><span class="ib"><svg viewBox="0 0 24 24" style="width:20px;height:20px;fill:#d32f2f;"><path d="M12 2C6.470 2 2 6.470 2 12s4.470 10 10 10 10-4.470 10-10S17.530 2 12 2zm5 13.590L15.590 17 12 13.410 8.410 17 7 15.590 10.590 12 7 8.410 8.410 7 12 10.590 15.590 7 17 8.410 13.410 12 17 15.590z"/></svg></span></td></tr>
<tr><td>19/5/2024</td><td class="mono">TRX-2024-002</td><td><span class="chip suc ic"><svg viewBox="0 0 24 24" style="width:18px;height:18px;fill:#fff;"><path d="m16 6 2.290 2.290-4.880 4.880-4-4L2 16.590 3.410 18l6-6 4 4 6.300-6.290L22 12V6z"/></svg><span>Ingreso</span></span></td><td>SERVICIOS</td><td>Pago valuación PRY-2024-0…</td><td>Cuenta Principal USD</td><td class="ar amt g">+USD 75.000,00</td><td><span class="chip err"><span>Cancelada</span></span></td><td class="ac"><span class="ib"><svg viewBox="0 0 24 24" style="width:20px;height:20px;fill:rgba(0,0,0,0.54);"><path d="M12 4.500C7 4.500 2.730 7.610 1 12c1.730 4.390 6 7.500 11 7.500s9.270-3.110 11-7.500c-1.730-4.390-6-7.500-11-7.500zM12 17c-2.760 0-5-2.240-5-5s2.240-5 5-5 5 2.240 5 5-2.240 5-5 5zm0-8c-1.660 0-3 1.340-3 3s1.340 3 3 3 3-1.340 3-3-1.340-3-3-3z"/></svg></span></td></tr>
<tr><td>9/5/2024</td><td class="mono">TRX-2024-011</td><td><span class="chip err ic"><svg viewBox="0 0 24 24" style="width:18px;height:18px;fill:#fff;"><path d="m16 18 2.290-2.290-4.880-4.880-4 4L2 7.410 3.410 6l6 6 4-4 6.300 6.290L22 12v6z"/></svg><span>Gasto</span></span></td><td>MATERIALES</td><td>Compra materiales proyecto …</td><td>Cuenta Principal USD</td><td class="ar amt r">-USD 35.000,00</td><td><span class="chip pri"><span>Confirmada</span></span></td><td class="ac"><span class="ib"><svg viewBox="0 0 24 24" style="width:20px;height:20px;fill:rgba(0,0,0,0.54);"><path d="M12 4.500C7 4.500 2.730 7.610 1 12c1.730 4.390 6 7.500 11 7.500s9.270-3.110 11-7.500c-1.730-4.390-6-7.500-11-7.500zM12 17c-2.760 0-5-2.240-5-5s2.240-5 5-5 5 2.240 5 5-2.240 5-5 5zm0-8c-1.660 0-3 1.340-3 3s1.340 3 3 3 3-1.340 3-3-1.340-3-3-3z"/></svg></span><span class="ib"><svg viewBox="0 0 24 24" style="width:20px;height:20px;fill:#2e7d32;"><path d="M12 2C6.480 2 2 6.480 2 12s4.480 10 10 10 10-4.480 10-10S17.520 2 12 2zm-2 15-5-5 1.410-1.410L10 14.170l7.590-7.590L19 8l-9 9z"/></svg></span><span class="ib"><svg viewBox="0 0 24 24" style="width:20px;height:20px;fill:#d32f2f;"><path d="M12 2C6.470 2 2 6.470 2 12s4.470 10 10 10 10-4.470 10-10S17.530 2 12 2zm5 13.590L15.590 17 12 13.410 8.410 17 7 15.590 10.590 12 7 8.410 8.410 7 12 10.590 15.590 7 17 8.410 13.410 12 17 15.590z"/></svg></span></td></tr>
<tr><td>14/4/2024</td><td class="mono">TRX-2024-007</td><td><span class="chip err ic"><svg viewBox="0 0 24 24" style="width:18px;height:18px;fill:#fff;"><path d="m16 18 2.290-2.290-4.880-4.880-4 4L2 7.410 3.410 6l6 6 4-4 6.300 6.290L22 12v6z"/></svg><span>Gasto</span></span></td><td>PROVEEDORES</td><td>Pago contratista CONT-001 -…</td><td>Cuenta Principal USD</td><td class="ar amt r">-USD 45.000,00</td><td><span class="chip pri"><span>Confirmada</span></span></td><td class="ac"><span class="ib"><svg viewBox="0 0 24 24" style="width:20px;height:20px;fill:rgba(0,0,0,0.54);"><path d="M12 4.500C7 4.500 2.730 7.610 1 12c1.730 4.390 6 7.500 11 7.500s9.270-3.110 11-7.500c-1.730-4.390-6-7.500-11-7.500zM12 17c-2.760 0-5-2.240-5-5s2.240-5 5-5 5 2.240 5 5-2.240 5-5 5zm0-8c-1.660 0-3 1.340-3 3s1.340 3 3 3 3-1.340 3-3-1.340-3-3-3z"/></svg></span><span class="ib"><svg viewBox="0 0 24 24" style="width:20px;height:20px;fill:#2e7d32;"><path d="M12 2C6.480 2 2 6.480 2 12s4.480 10 10 10 10-4.480 10-10S17.520 2 12 2zm-2 15-5-5 1.410-1.410L10 14.170l7.590-7.590L19 8l-9 9z"/></svg></span><span class="ib"><svg viewBox="0 0 24 24" style="width:20px;height:20px;fill:#d32f2f;"><path d="M12 2C6.470 2 2 6.470 2 12s4.470 10 10 10 10-4.470 10-10S17.530 2 12 2zm5 13.590L15.590 17 12 13.410 8.410 17 7 15.590 10.590 12 7 8.410 8.410 7 12 10.590 15.590 7 17 8.410 13.410 12 17 15.590z"/></svg></span></td></tr>
<tr><td>9/4/2024</td><td class="mono">TRX-2024-003</td><td><span class="chip suc ic"><svg viewBox="0 0 24 24" style="width:18px;height:18px;fill:#fff;"><path d="m16 6 2.290 2.290-4.880 4.880-4-4L2 16.590 3.410 18l6-6 4 4 6.300-6.290L22 12V6z"/></svg><span>Ingreso</span></span></td><td>SERVICIOS</td><td>Pago valuación PRY-2024-0…</td><td>Cuenta Principal USD</td><td class="ar amt g">+USD 90.000,00</td><td><span class="chip pri"><span>Confirmada</span></span></td><td class="ac"><span class="ib"><svg viewBox="0 0 24 24" style="width:20px;height:20px;fill:rgba(0,0,0,0.54);"><path d="M12 4.500C7 4.500 2.730 7.610 1 12c1.730 4.390 6 7.500 11 7.500s9.270-3.110 11-7.500c-1.730-4.390-6-7.500-11-7.500zM12 17c-2.760 0-5-2.240-5-5s2.240-5 5-5 5 2.240 5 5-2.240 5-5 5zm0-8c-1.660 0-3 1.340-3 3s1.340 3 3 3 3-1.340 3-3-1.340-3-3-3z"/></svg></span><span class="ib"><svg viewBox="0 0 24 24" style="width:20px;height:20px;fill:#2e7d32;"><path d="M12 2C6.480 2 2 6.480 2 12s4.480 10 10 10 10-4.480 10-10S17.520 2 12 2zm-2 15-5-5 1.410-1.410L10 14.170l7.590-7.590L19 8l-9 9z"/></svg></span><span class="ib"><svg viewBox="0 0 24 24" style="width:20px;height:20px;fill:#d32f2f;"><path d="M12 2C6.470 2 2 6.470 2 12s4.470 10 10 10 10-4.470 10-10S17.530 2 12 2zm5 13.590L15.590 17 12 13.410 8.410 17 7 15.590 10.590 12 7 8.410 8.410 7 12 10.590 15.590 7 17 8.410 13.410 12 17 15.590z"/></svg></span></td></tr>
<tr><td>14/3/2024</td><td class="mono">TRX-2024-001</td><td><span class="chip suc ic"><svg viewBox="0 0 24 24" style="width:18px;height:18px;fill:#fff;"><path d="m16 6 2.290 2.290-4.880 4.880-4-4L2 16.590 3.410 18l6-6 4 4 6.300-6.290L22 12V6z"/></svg><span>Ingreso</span></span></td><td>SERVICIOS</td><td>Pago valuación PRY-2024-0…</td><td>Cuenta Principal USD</td><td class="ar amt g">+USD 75.000,00</td><td><span class="chip pri"><span>Confirmada</span></span></td><td class="ac"><span class="ib"><svg viewBox="0 0 24 24" style="width:20px;height:20px;fill:rgba(0,0,0,0.54);"><path d="M12 4.500C7 4.500 2.730 7.610 1 12c1.730 4.390 6 7.500 11 7.500s9.270-3.110 11-7.500c-1.730-4.390-6-7.500-11-7.500zM12 17c-2.760 0-5-2.240-5-5s2.240-5 5-5 5 2.240 5 5-2.240 5-5 5zm0-8c-1.660 0-3 1.340-3 3s1.340 3 3 3 3-1.340 3-3-1.340-3-3-3z"/></svg></span><span class="ib"><svg viewBox="0 0 24 24" style="width:20px;height:20px;fill:#2e7d32;"><path d="M12 2C6.480 2 2 6.480 2 12s4.480 10 10 10 10-4.480 10-10S17.520 2 12 2zm-2 15-5-5 1.410-1.410L10 14.170l7.590-7.590L19 8l-9 9z"/></svg></span><span class="ib"><svg viewBox="0 0 24 24" style="width:20px;height:20px;fill:#d32f2f;"><path d="M12 2C6.470 2 2 6.470 2 12s4.470 10 10 10 10-4.470 10-10S17.530 2 12 2zm5 13.590L15.590 17 12 13.410 8.410 17 7 15.590 10.590 12 7 8.410 8.410 7 12 10.590 15.590 7 17 8.410 13.410 12 17 15.590z"/></svg></span></td></tr>
</tbody></table></div>
<div class="pager"><span class="pl">Filas por página</span><span class="pn">20</span><svg class="pdd" viewBox="0 0 24 24" style="width:24px;height:24px;fill:rgba(0,0,0,0.54);"><path d="m7 10 5 5 5-5z"/></svg><span class="pr">1–13 of 13</span><span class="pb"><svg viewBox="0 0 24 24" style="width:24px;height:24px;fill:rgba(0,0,0,0.26);"><path d="M15.410 16.590 10.830 12l4.580-4.590L14 6l-6 6 6 6 1.410-1.410z"/></svg></span><span class="pb"><svg viewBox="0 0 24 24" style="width:24px;height:24px;fill:rgba(0,0,0,0.26);"><path d="M8.590 16.590 13.170 12 8.590 7.410 10 6l6 6-6 6-1.410-1.410z"/></svg></span></div>
</main>
</body></html>
